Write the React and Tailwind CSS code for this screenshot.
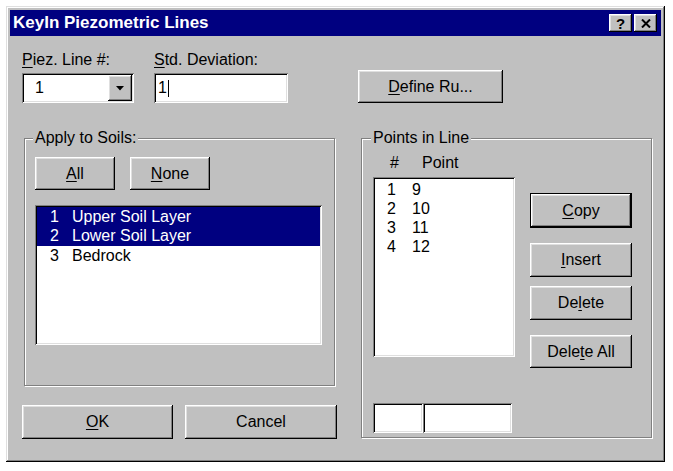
import React from "react";

const raised =
  "bg-[#c0c0c0] shadow-[inset_-1px_-1px_0_#000,inset_1px_1px_0_#fff,inset_-2px_-2px_0_#808080,inset_2px_2px_0_#dfdfdf]";
const sunken =
  "bg-white shadow-[inset_1px_1px_0_#808080,inset_-1px_-1px_0_#fff,inset_2px_2px_0_#000,inset_-2px_-2px_0_#dfdfdf]";
const etched = "border border-[#808080] shadow-[inset_1px_1px_0_#fff,1px_1px_0_#fff]";

function U({ children }) {
  return <span className="underline decoration-1 underline-offset-[2px]">{children}</span>;
}

export default function App() {
  return (
    <div className="w-[673px] h-[471px] bg-white pt-[6px] pl-[6px] font-['Liberation_Sans',Arial,sans-serif] text-[16px] leading-[18px] text-black">
      <div className="w-[659px] h-[456px] bg-[#c0c0c0] p-[4px] flex flex-col shadow-[inset_-1px_-1px_0_#000,inset_1px_1px_0_#dfdfdf,inset_-2px_-2px_0_#808080,inset_2px_2px_0_#fff]">
        {/* Title bar */}
        <div className="h-[26px] bg-[#000080] flex items-center pl-[3px] pr-[4px]">
          <span className="text-white font-bold text-[17px] leading-[20px]">KeyIn Piezometric Lines</span>
          <div className="ml-auto flex gap-[2px]">
            <div className={`${raised} w-[23px] h-[18px] flex items-center justify-center`}>
              <span className="font-bold text-[15px] leading-[15px]">?</span>
            </div>
            <div className={`${raised} w-[23px] h-[18px] flex items-center justify-center`}>
              <svg width="10" height="9" viewBox="0 0 10 9">
                <path d="M1 0.5 L9 8.5 M9 0.5 L1 8.5" stroke="#000" strokeWidth="2" />
              </svg>
            </div>
          </div>
        </div>

        {/* Client */}
        <div className="flex flex-col">
          {/* Top row */}
          <div className="flex pl-[12px] pt-[15px]">
            <div className="flex flex-col w-[112px]">
              <div className="h-[18px]">
                <U>P</U>iez. Line #:
              </div>
              <div className={`${sunken} mt-[4px] h-[30px] flex items-center pl-[13px] pr-[2px]`}>
                <span>1</span>
                <div className={`${raised} ml-auto w-[24px] h-[26px] flex items-center justify-center`}>
                  <svg width="8" height="5" viewBox="0 0 8 5">
                    <path d="M0 0 H8 L4 4.5 Z" fill="#000" />
                  </svg>
                </div>
              </div>
            </div>
            <div className="flex flex-col w-[134px] ml-[20px]">
              <div className="h-[18px]">
                <U>S</U>td. Deviation:
              </div>
              <div className={`${sunken} mt-[4px] h-[30px] flex items-center pl-[4px]`}>
                <span>1</span>
                <span className="inline-block w-[1px] h-[17px] bg-black ml-[1px]" />
              </div>
            </div>
            <div className={`${raised} ml-[70px] mt-[19px] w-[145px] h-[33px] flex items-center justify-center`}>
              <span>
                <U>D</U>efine Ru...
              </span>
            </div>
          </div>

          {/* Lower section */}
          <div className="flex pl-[12px] mt-[35px]">
            {/* Left column */}
            <div className="flex flex-col w-[315px]">
              <div className={`${etched} ml-[2px] w-[311px] h-[248px] flex flex-col`}>
                <span className="self-start -mt-[10px] ml-[8px] px-[2px] bg-[#c0c0c0] h-[18px]">
                  Apply to Soils:
                </span>
                <div className="flex ml-[10px] mt-[10px] gap-[15px]">
                  <div className={`${raised} w-[80px] h-[33px] flex items-center justify-center`}>
                    <span>
                      <U>A</U>ll
                    </span>
                  </div>
                  <div className={`${raised} w-[80px] h-[33px] flex items-center justify-center`}>
                    <span>
                      <U>N</U>one
                    </span>
                  </div>
                </div>
                <div className={`${sunken} ml-[10px] mt-[15px] w-[287px] h-[140px] p-[2px] flex flex-col`}>
                  {[
                    ["1", "Upper Soil Layer", true],
                    ["2", "Lower Soil Layer", true],
                    ["3", "Bedrock", false],
                  ].map(([n, t, sel]) => (
                    <div
                      key={n}
                      className={`flex h-[19.5px] items-center pl-[13px] ${sel ? "bg-[#000080] text-white" : ""}`}
                    >
                      <span className="w-[22px]">{n}</span>
                      <span>{t}</span>
                    </div>
                  ))}
                </div>
              </div>
              <div className="flex mt-[19px] gap-[12px]">
                <div className={`${raised} w-[151px] h-[34px] flex items-center justify-center`}>
                  <span>
                    <U>O</U>K
                  </span>
                </div>
                <div className={`${raised} w-[152px] h-[34px] flex items-center justify-center`}>
                  <span>Cancel</span>
                </div>
              </div>
            </div>

            {/* Right column */}
            <div className={`${etched} ml-[24px] w-[291px] h-[300px] flex flex-col`}>
              <span className="self-start -mt-[10px] ml-[9px] px-[2px] bg-[#c0c0c0] h-[18px]">
                Points in Line
              </span>
              <div className="flex mt-[7px] ml-[28px] h-[18px]">
                <span className="w-[32px]">#</span>
                <span>Point</span>
              </div>
              <div className="flex mt-[5px] ml-[11px]">
                <div className={`${sunken} w-[142px] h-[180px] pt-[3px] px-[2px] flex flex-col`}>
                  {[
                    ["1", "9"],
                    ["2", "10"],
                    ["3", "11"],
                    ["4", "12"],
                  ].map(([n, v]) => (
                    <div key={n} className="flex h-[19px] items-center pl-[12px]">
                      <span className="w-[25px]">{n}</span>
                      <span>{v}</span>
                    </div>
                  ))}
                </div>
                <div className="flex flex-col ml-[15px] w-[102px]">
                  <div className="mt-[16px] w-[102px] h-[35px] border border-black">
                    <div className={`${raised} w-full h-full flex items-center justify-center`}>
                      <span>
                        <U>C</U>opy
                      </span>
                    </div>
                  </div>
                  <div className={`${raised} mt-[15px] w-[102px] h-[34px] flex items-center justify-center`}>
                    <span>
                      <U>I</U>nsert
                    </span>
                  </div>
                  <div className={`${raised} mt-[9px] w-[102px] h-[34px] flex items-center justify-center`}>
                    <span>
                      De<U>l</U>ete
                    </span>
                  </div>
                  <div className={`${raised} mt-[15px] w-[102px] h-[33px] flex items-center justify-center`}>
                    <span>
                      Dele<U>t</U>e All
                    </span>
                  </div>
                </div>
              </div>
              <div className="flex mt-[35px] ml-[11px]">
                <div className={`${sunken} w-[50px] h-[30px]`} />
                <div className={`${sunken} w-[89px] h-[30px]`} />
              </div>
            </div>
          </div>
        </div>
      </div>
    </div>
  );
}
